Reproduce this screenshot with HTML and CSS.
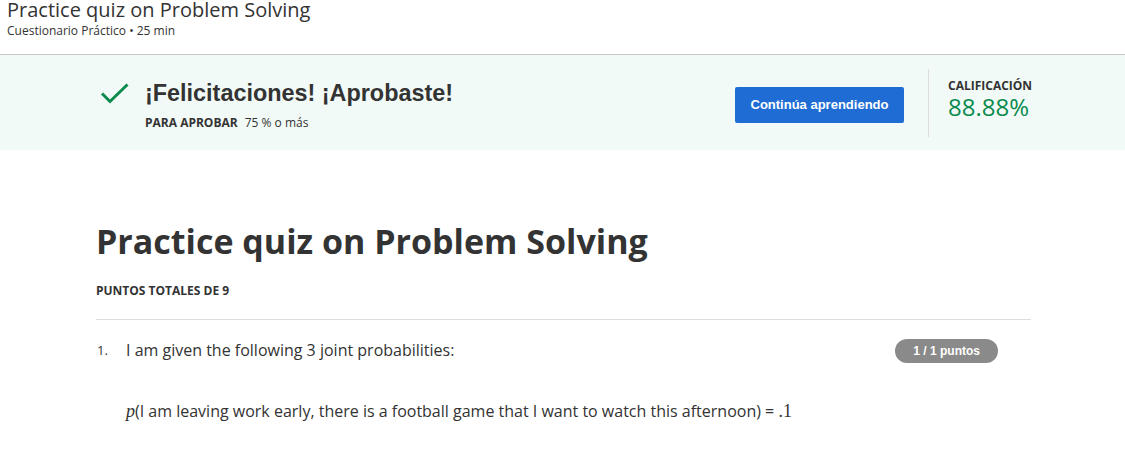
FILE: index.html
```html
<!DOCTYPE html>
<html lang="es">
<head>
<meta charset="utf-8">
<title>Practice quiz on Problem Solving</title>
<link rel="stylesheet" href="styles.css">
</head>
<body>
<header class="header">
  <h1 class="header-title">Practice quiz on Problem Solving</h1>
  <div class="header-sub">Cuestionario Práctico • 25 min</div>
</header>
<section class="banner">
  <div class="banner-inner">
    <div class="banner-left">
      <div class="banner-head">
        <svg class="check" width="30" height="22" viewBox="0 0 30 22" aria-hidden="true">
          <path d="M2 10.5 L10 18.5 L27.5 1.5" fill="none" stroke="#0b8a4e" stroke-width="3"/>
        </svg>
        <h2 class="banner-title">¡Felicitaciones! ¡Aprobaste!</h2>
      </div>
      <div class="pass-line"><span class="pass-label">PARA APROBAR</span><span class="pass-value">75 % o más</span></div>
    </div>
    <button class="btn-continue">Continúa aprendiendo</button>
    <div class="grade">
      <div class="grade-label">CALIFICACIÓN</div>
      <div class="grade-value">88.88%</div>
    </div>
  </div>
</section>
<main class="main">
  <h1 class="quiz-title">Practice quiz on Problem Solving</h1>
  <div class="total">PUNTOS TOTALES DE 9</div>
  <div class="question">
    <div class="q-num">1.</div>
    <div class="q-body">
      <div class="q-text">I am given the following 3 joint probabilities:</div>
      <div class="q-formula"><span class="math-var">p</span>(I am leaving work early, there is a football game that I want to watch this afternoon) = <span class="math-num">.1</span></div>
    </div>
    <div class="badge">1 / 1 puntos</div>
  </div>
</main>
</body>
</html>
```

FILE: styles.css
```css
* { box-sizing: border-box; }
body {
  margin: 0;
  font-family: "Open Sans", "DejaVu Sans", sans-serif;
  color: #333;
  background: #fff;
}
.header {
  height: 55px;
  padding: 0 7px;
  border-bottom: 1px solid #c6c6c6;
}
.header-title {
  margin: 0;
  font-size: 20px;
  line-height: 20px;
  font-weight: 400;
  color: #333;
}
.header-sub {
  margin-top: 3px;
  font-size: 12px;
  line-height: 16px;
  color: #333;
}
.banner {
  background: #f2faf7;
  padding: 14px 0 13px;
}
.banner-inner {
  margin-left: 96px;
  width: 935px;
  display: flex;
  align-items: center;
  height: 68px;
}
.banner-left {
  flex: 1;
  padding-left: 4px;
  align-self: flex-start;
  padding-top: 12px;
}
.banner-head {
  display: flex;
  align-items: center;
  gap: 15px;
}
.check { flex: none; margin-top: 2px; }
.banner-title {
  margin: 0;
  font-family: "Liberation Sans", Arial, sans-serif;
  font-weight: 700;
  font-size: 23.4px;
  line-height: 24px;
  color: #333;
}
.pass-line {
  margin-top: 10px;
  padding-left: 45px;
  font-size: 12px;
  line-height: 16px;
}
.pass-label { font-weight: 700; margin-right: 7px; }
.btn-continue {
  flex: none;
  width: 169px;
  height: 36px;
  margin-top: 3px;
  background: #1f6dd4;
  color: #fff;
  border: none;
  border-radius: 2px;
  font-family: "Liberation Sans", Arial, sans-serif;
  font-weight: 700;
  font-size: 13px;
  padding: 0;
}
.grade {
  flex: none;
  align-self: stretch;
  margin-left: 24px;
  border-left: 1px solid #dcdcdc;
  padding: 9px 0 0 19px;
  width: 103px;
}
.grade-label {
  font-size: 12px;
  font-weight: 700;
  line-height: 15px;
  color: #333;
}
.grade-value {
  margin-top: 1px;
  font-size: 24px;
  line-height: 26px;
  color: #0b8a4e;
}
.main {
  margin-left: 96px;
  width: 935px;
}
.quiz-title {
  margin: 70px 0 0;
  font-size: 34px;
  line-height: 42px;
  font-weight: 700;
  color: #333;
}
.total {
  margin-top: 21px;
  font-size: 12px;
  font-weight: 700;
  line-height: 16px;
  padding-bottom: 20px;
  border-bottom: 1px solid #dedede;
}
.question {
  display: flex;
  align-items: flex-start;
  padding-top: 19px;
}
.q-num {
  width: 30px;
  padding-left: 1px;
  font-size: 13px;
  line-height: 22px;
  flex: none;
}
.q-body { flex: 1; }
.q-text {
  font-size: 16px;
  line-height: 22px;
}
.q-formula {
  margin-top: 39px;
  font-size: 16px;
  line-height: 22px;
}
.math-var {
  font-family: "Liberation Serif", "Times New Roman", serif;
  font-style: italic;
  font-size: 18px;
}
.math-num {
  font-family: "Liberation Serif", "Times New Roman", serif;
  font-size: 18px;
}
.badge {
  flex: none;
  margin-right: 33px;
  height: 24px;
  padding: 0 18px;
  border-radius: 12px;
  background: #8a8a8a;
  color: #fff;
  font-family: "Liberation Sans", Arial, sans-serif;
  font-weight: 700;
  font-size: 12px;
  line-height: 24px;
}
```
